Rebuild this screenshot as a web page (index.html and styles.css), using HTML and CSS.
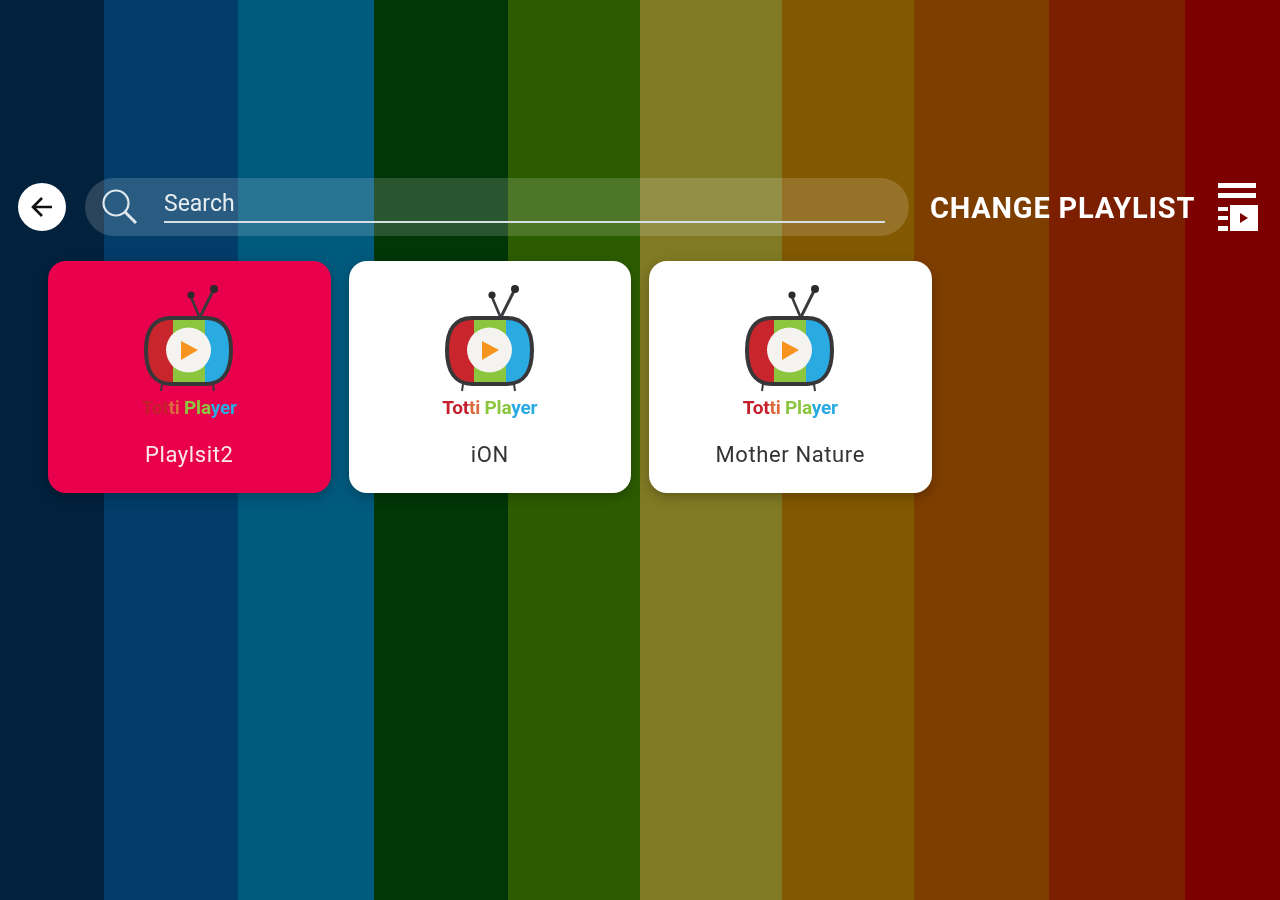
FILE: index.html
```html
<!DOCTYPE html>
<html lang="en">
<head>
    <meta charset="UTF-8">
    <title>Totti Player</title>
    <link rel="stylesheet" href="styles.css">
</head>
<body>
    <svg width="0" height="0" class="defs">
        <symbol id="tv" viewBox="0 0 100 110">
            <path d="M60 32 L52 13" stroke="#3a3a3c" stroke-width="2.6" fill="none"/>
            <path d="M61 33 L74 7" stroke="#3a3a3c" stroke-width="3" fill="none"/>
            <circle cx="52" cy="11" r="3.6" fill="#2b2b2d"/>
            <circle cx="75" cy="5" r="4" fill="#2b2b2d"/>
            <path d="M23 100 L22 107 M74 100 L75 107" stroke="#3a3a3c" stroke-width="2"/>
            <clipPath id="screen">
                <path d="M32 34 H67 C84 34 92 46 92 66 C92 87 84 100 67 100 H32 C15 100 7 87 7 66 C7 46 15 34 32 34 Z"/>
            </clipPath>
            <g clip-path="url(#screen)">
                <rect x="5" y="32" width="29" height="70" fill="#c9252d"/>
                <rect x="34" y="32" width="32" height="70" fill="#8cc63f"/>
                <rect x="66" y="32" width="28" height="70" fill="#29abe2"/>
            </g>
            <path d="M32 34 H67 C84 34 92 46 92 66 C92 87 84 100 67 100 H32 C15 100 7 87 7 66 C7 46 15 34 32 34 Z" fill="none" stroke="#37373a" stroke-width="4"/>
            <circle cx="49.5" cy="66" r="22.5" fill="#f4f3ef"/>
            <path d="M42 57 L59 66 L42 76 Z" fill="#f7941d"/>
        </symbol>
    </svg>

    <div class="page">
        <div class="top-bar">
            <button class="back-btn">
                <svg width="28" height="28" viewBox="0 0 28 28">
                    <path d="M24 14 H6 M14 5 L5 14 L14 23" stroke="#111" stroke-width="2.6" fill="none"/>
                </svg>
            </button>
            <div class="search-box">
                <svg class="search-icon" width="38" height="38" viewBox="0 0 38 38">
                    <circle cx="15" cy="15" r="12.5" stroke="#dfe8ee" stroke-width="2.2" fill="none"/>
                    <path d="M24 24 L35 35" stroke="#dfe8ee" stroke-width="3"/>
                </svg>
                <div class="search-field">Search</div>
            </div>
            <div class="change-playlist">CHANGE PLAYLIST</div>
            <svg class="playlist-icon" width="40" height="50" viewBox="0 0 40 50">
                <rect x="0" y="0" width="38" height="5" fill="#fff"/>
                <rect x="0" y="10" width="38" height="5" fill="#fff"/>
                <rect x="0" y="24" width="10" height="4" fill="#fff"/>
                <rect x="0" y="33" width="10" height="4" fill="#fff"/>
                <rect x="0" y="43" width="10" height="5" fill="#fff"/>
                <path fill-rule="evenodd" fill="#fff" d="M12 22 H40 V48 H12 Z M22 30 V40 L30 35 Z"/>
            </svg>
        </div>

        <div class="cards">
            <div class="card active">
                <svg class="tv"><use href="#tv"/></svg>
                <div class="brand"><span class="red">Tot</span><span class="orange">ti</span> <span class="green">Pla</span><span class="blue">yer</span></div>
                <div class="card-name">Playlsit2</div>
            </div>
            <div class="card">
                <svg class="tv"><use href="#tv"/></svg>
                <div class="brand"><span class="red">Tot</span><span class="orange">ti</span> <span class="green">Pla</span><span class="blue">yer</span></div>
                <div class="card-name">iON</div>
            </div>
            <div class="card">
                <svg class="tv"><use href="#tv"/></svg>
                <div class="brand"><span class="red">Tot</span><span class="orange">ti</span> <span class="green">Pla</span><span class="blue">yer</span></div>
                <div class="card-name">Mother Nature</div>
            </div>
        </div>
    </div>
</body>
</html>
```

FILE: styles.css
```css
* {
    margin: 0;
    padding: 0;
    box-sizing: border-box;
}

body {
    font-family: Roboto, 'Liberation Sans', sans-serif;
    height: 900px;
    overflow: hidden;
    background: linear-gradient(90deg,
        #02213d 0, #02213d 104px,
        #013d68 104px, #013d68 238px,
        #005a7e 238px, #005a7e 374px,
        #003608 374px, #003608 508px,
        #2c5c00 508px, #2c5c00 640px,
        #807a24 640px, #807a24 782px,
        #825800 782px, #825800 914px,
        #7e3e00 914px, #7e3e00 1049px,
        #7c1e00 1049px, #7c1e00 1185px,
        #7c0000 1185px, #7c0000 100%);
}

.defs {
    position: absolute;
}

.page {
    padding-top: 178px;
    filter: blur(0.6px);
}

/* Top row */
.top-bar {
    display: flex;
    align-items: center;
    height: 58px;
    padding-left: 18px;
}

.back-btn {
    width: 48px;
    height: 48px;
    border: none;
    border-radius: 50%;
    background: #fff;
    display: flex;
    align-items: center;
    justify-content: center;
    margin-top: -1px;
}

.search-box {
    width: 824px;
    height: 58px;
    margin-left: 19px;
    border-radius: 29px;
    background: rgba(255, 255, 255, 0.16);
    display: flex;
    align-items: center;
    padding-left: 16px;
}

.search-icon {
    flex: none;
}

.search-field {
    width: 721px;
    height: 40px;
    margin-left: 25px;
    margin-top: -8px;
    padding-top: 7px;
    border-bottom: 2px solid #d5dfe4;
    color: #e6edf1;
    font-size: 23px;
}

.change-playlist {
    margin-left: 21px;
    margin-top: 2px;
    color: #fff;
    font-size: 29px;
    font-weight: 700;
    letter-spacing: 0.8px;
    white-space: nowrap;
    width: 288px;
}

.playlist-icon {
    flex: none;
    margin-top: 2px;
}

/* Playlist cards */
.cards {
    display: flex;
    gap: 18px;
    padding: 25px 0 0 48px;
}

.card {
    width: 282.5px;
    height: 232px;
    border-radius: 18px;
    background: #fff;
    color: #333;
    display: flex;
    flex-direction: column;
    align-items: center;
    box-shadow: 0 4px 12px rgba(0, 0, 0, 0.25);
}

.card.active {
    background: #e8004c;
    color: #fbe6ec;
}

.tv {
    width: 100px;
    height: 110px;
    margin-top: 23px;
    flex: none;
}

.brand {
    font-size: 19px;
    font-weight: 700;
    letter-spacing: -0.2px;
    height: 22px;
    line-height: 22px;
    margin-top: 3px;
}

.red {
    color: #c4202c;
}

.orange {
    color: #dc6a3c;
}

.green {
    color: #8cc63f;
}

.blue {
    color: #29abe2;
}

.card-name {
    font-size: 22px;
    letter-spacing: 0.6px;
    margin-top: 23px;
}
```
